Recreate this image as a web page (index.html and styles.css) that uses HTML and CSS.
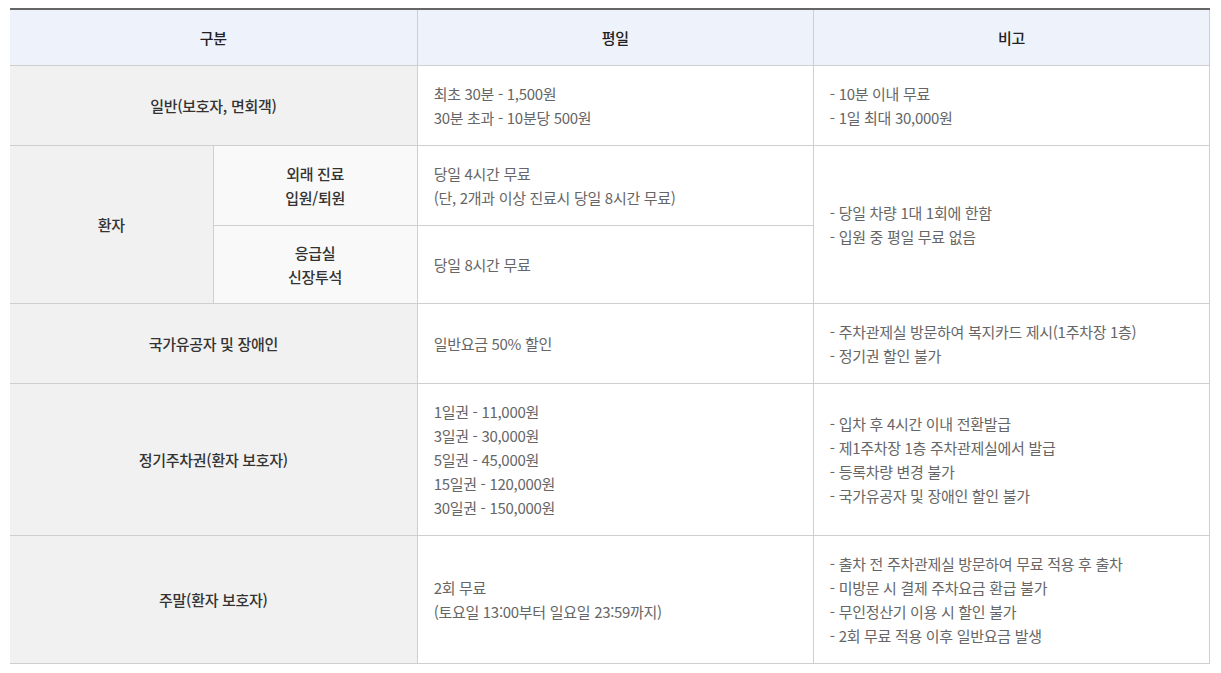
FILE: index.html
```html
<!DOCTYPE html>
<html lang="ko">
<head>
<meta charset="utf-8">
<link rel="stylesheet" href="styles.css">
</head>
<body>
<table class="fee">
  <colgroup>
    <col class="c1"><col class="c2"><col class="c3"><col class="c4">
  </colgroup>
  <thead>
    <tr class="hrow">
      <th colspan="2">구분</th>
      <th>평일</th>
      <th>비고</th>
    </tr>
  </thead>
  <tbody>
    <tr class="r80">
      <th colspan="2" class="cat">일반(보호자, 면회객)</th>
      <td>최초 30분 - 1,500원<br>30분 초과 - 10분당 500원</td>
      <td>- 10분 이내 무료<br>- 1일 최대 30,000원</td>
    </tr>
    <tr class="r80">
      <th rowspan="2" class="cat">환자</th>
      <th class="sub">외래 진료<br>입원/퇴원</th>
      <td>당일 4시간 무료<br>(단, 2개과 이상 진료시 당일 8시간 무료)</td>
      <td rowspan="2">- 당일 차량 1대 1회에 한함<br>- 입원 중 평일 무료 없음</td>
    </tr>
    <tr class="r78">
      <th class="sub">응급실<br>신장투석</th>
      <td>당일 8시간 무료</td>
    </tr>
    <tr class="r80">
      <th colspan="2" class="cat">국가유공자 및 장애인</th>
      <td>일반요금 50% 할인</td>
      <td>- 주차관제실 방문하여 복지카드 제시(1주차장 1층)<br>- 정기권 할인 불가</td>
    </tr>
    <tr class="r152">
      <th colspan="2" class="cat">정기주차권(환자 보호자)</th>
      <td>1일권 - 11,000원<br>3일권 - 30,000원<br>5일권 - 45,000원<br>15일권 - 120,000원<br>30일권 - 150,000원</td>
      <td>- 입차 후 4시간 이내 전환발급<br>- 제1주차장 1층 주차관제실에서 발급<br>- 등록차량 변경 불가<br>- 국가유공자 및 장애인 할인 불가</td>
    </tr>
    <tr class="r128">
      <th colspan="2" class="cat">주말(환자 보호자)</th>
      <td>2회 무료<br>(토요일 13:00부터 일요일 23:59까지)</td>
      <td>- 출차 전 주차관제실 방문하여 무료 적용 후 출차<br>- 미방문 시 결제 주차요금 환급 불가<br>- 무인정산기 이용 시 할인 불가<br>- 2회 무료 적용 이후 일반요금 발생</td>
    </tr>
  </tbody>
</table>
</body>
</html>
```

FILE: styles.css
```css
html, body {
  margin: 0;
  background: #fff;
}
body {
  padding: 8px 11px 0 10px;
  font-family: "Noto Sans CJK KR", "Noto Sans", sans-serif;
  font-size: 15px;
  letter-spacing: -0.3px;
  color: #666;
}
.fee {
  width: 1200px;
  border-collapse: collapse;
  table-layout: fixed;
  border-top: 2px solid #666;
}
.c1 { width: 203px; }
.c2 { width: 204px; }
.c3 { width: 396px; }
.c4 { width: 396px; }

.fee th, .fee td {
  border: 1px solid #cfcfcf;
  line-height: 24px;
  vertical-align: middle;
}
.fee tr > :first-child { border-left: none; }
.hrow th {
  height: 55px;
  padding: 0;
  background: #eef3fb;
  color: #222;
  font-weight: 500;
  text-align: center;
  border-top: none;
}
.fee tbody th {
  font-weight: 500;
  color: #333;
  text-align: center;
  padding: 0 10px;
}
.fee .cat { background: #f1f1f1; }
.fee .sub { background: #f9f9f9; }
.fee td {
  padding: 0 16px;
  text-align: left;
}
.r80 > * { height: 79px; }
.r78 > * { height: 77px; }
.r152 > * { height: 151px; }
.r128 > * { height: 127px; }
```
